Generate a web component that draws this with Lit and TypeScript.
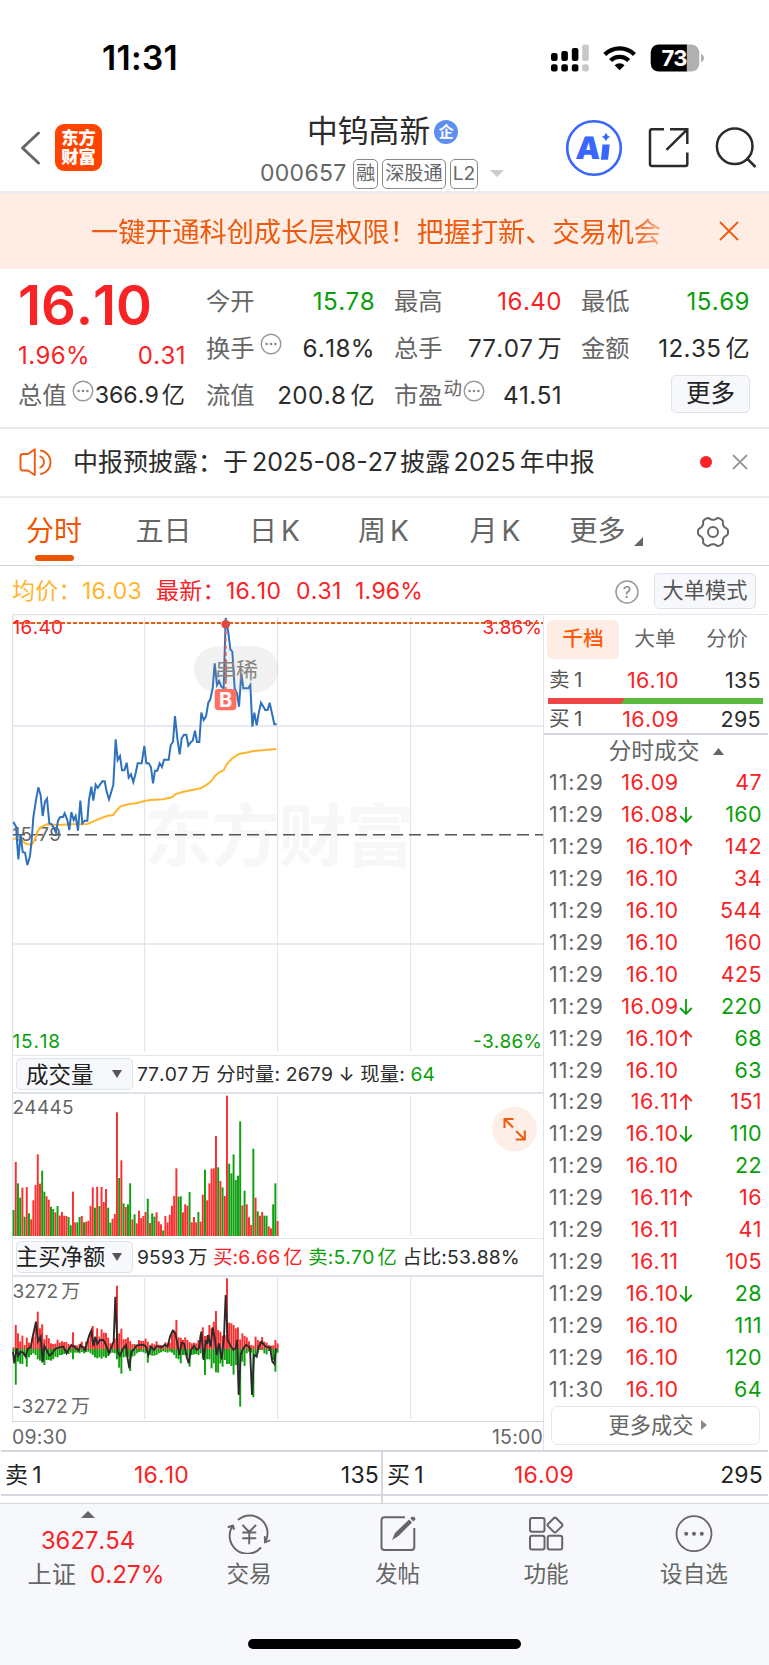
import { LitElement, html, svg, css } from 'lit';
import { customElement } from 'lit/decorators.js';

type Pt = [number, number];

const STEP = 2.2;
const X0 = 12.6;

// Minute prices and averages as curve points, three units per pixel.
const PRICE: number[] = [
  40,636,48,650,55,748,62,672,68,726,75,728,82,765,90,738,95,690,100,622,108,570,115,532,122,556,128,618,135,575,141,566,
  148,640,155,643,162,655,168,668,174,632,181,621,189,621,194,610,202,630,208,660,214,606,221,630,227,618,234,662,241,572,
  247,640,254,632,262,632,267,570,274,530,280,572,287,524,293,534,300,524,307,514,314,514,320,545,327,568,333,548,340,524,
  347,388,353,450,360,438,366,481,373,481,380,458,386,503,393,493,400,516,407,490,413,460,425,460,433,408,439,460,446,460,
  453,472,459,520,465,482,472,482,479,460,486,471,492,449,506,449,512,406,519,395,525,318,532,385,539,433,545,385,552,374,
  559,374,565,407,572,397,578,392,585,362,591,396,598,396,604,308,611,330,618,320,625,277,631,268,638,235,644,160,651,225,
  657,213,664,230,671,235,677,24,680,45,684,60,691,118,697,125,704,235,711,250,717,290,724,190,730,235,745,235,751,225,
  757,350,763,308,770,346,776,310,783,278,796,300,803,300,809,278,823,343,830,343,
];
const AVG: number[] = [
  40,688,50,684,60,684,70,695,80,702,95,704,104,690,112,665,122,652,140,643,175,645,210,643,262,642,280,634,300,626,
  320,618,340,615,348,603,362,589,385,583,412,579,430,574,450,570,490,568,510,563,519,560,525,553,545,547,565,542,602,535,
  622,523,635,512,645,498,658,487,671,481,680,463,697,445,717,432,745,427,760,423,795,420,829,417,
];
const VOL =
  '480G 336R 400G 443G 413R 500G 411R 490G 508R 451R 405R 313R 401R 362G 425G 439R 449R 470G 477G 487R 468G 497R 486R 497R 498R 501G 526G 425R 517R 517G 501G 498R 517G 515R 512R 468R 412R 473G 410R 468G 411R 456R 417R 473G 518G 506R 492R 187R 384G 331R 460G 471R 463G 400G 508R 493G 520R 482R 504R 498R 486R 446G 519R 490G 500G 487R 514R 523R 541G 498R 517R 494R 467R 438R 355R 440G 439G 487R 463R 467R 426G 517R 501R 517R 486G 515R 434R 359G 451R 400R 356R 355R 258R 352G 393R 412G 438R 137R 341G 370G 313G 390G 377G 214G 466R 422G 463R 502R 525R 296G 443R 484G 497R 486R 497G 497G 529R 535R 463G 400G 513R';
const UP = [
  322,255,280,304,287,315,293,308,315,290,265,215,265,253,298,285,295,310,312,311,299,308,304,306,306,312,318,277,315,316,
  312,305,318,305,300,282,258,300,265,290,268,278,279,293,310,308,295,137,280,266,298,297,292,303,313,312,315,300,303,303,
  296,305,316,310,313,304,314,315,320,307,310,308,280,270,240,292,293,300,292,300,306,310,308,310,300,285,262,288,287,255,
  265,245,213,270,275,287,285,115,248,250,255,265,262,298,280,288,292,304,315,317,290,300,304,291,305,308,315,317,316,300,310,
];
const DOWN = [
  335,434,365,371,372,348,380,352,345,340,345,358,362,368,375,360,360,362,358,350,352,345,345,342,340,342,338,358,338,338,
  340,336,340,337,335,340,345,352,355,352,356,350,354,348,340,338,340,358,383,401,352,350,350,393,350,347,340,336,335,337,
  340,368,345,347,347,345,340,337,334,336,338,335,338,345,355,358,370,345,345,350,380,345,343,342,345,340,355,405,358,358,
  385,370,397,398,370,380,360,372,372,378,404,375,380,500,365,378,340,335,338,472,345,338,330,330,340,343,333,335,360,395,338,
];
const NET: number[] = [
  39,335,43,370,50,325,55,347,62,335,70,338,77,350,83,327,92,322,97,295,103,268,108,245,114,305,122,290,128,365,133,318,
  140,330,148,347,155,342,165,327,175,323,190,320,200,340,208,325,214,315,225,322,236,332,242,315,255,330,262,305,268,285,
  274,272,280,318,286,290,292,312,300,300,310,300,318,315,327,340,335,320,341,305,346,170,353,335,360,347,368,328,378,315,
  382,350,388,385,394,335,402,328,410,316,430,314,438,320,445,345,453,320,462,330,470,318,485,322,495,314,503,320,510,290,
  518,272,526,280,532,310,538,345,545,308,553,312,560,350,566,370,573,330,582,318,590,330,597,325,604,275,611,360,618,300,
  622,312,624,285,632,320,638,262,645,300,650,345,657,310,665,358,672,290,677,165,683,300,692,318,700,330,707,325,711,300,
  716,465,722,345,730,325,738,315,744,318,750,325,756,465,762,345,770,350,776,320,785,305,795,318,803,322,810,322,817,365,
  823,372,828,325,
];

const pts = (flat: number[], oy: number): string => {
  const out: string[] = [];
  for (let i = 0; i < flat.length; i += 2) {
    const p: Pt = [flat[i] / 3, oy + flat[i + 1] / 3];
    out.push(p[0].toFixed(2) + ',' + p[1].toFixed(2));
  }
  return out.join(' ');
};

// Outline of the settings gear: a circle with six soft lobes.
const GEAR = Array.from({ length: 72 }, (_, i) => {
  const a = (i * Math.PI) / 36;
  const r = 13.6 + 1.5 * Math.tanh(1.8 * Math.cos(6 * a) + 0.3);
  return `${(r * Math.cos(a)).toFixed(2)},${(r * Math.sin(a)).toFixed(2)}`;
}).join(' ');

const TRADES: [string, string, string, string, string][] = [
  ['11:29', '16.09', '', '47', 'r'],
  ['11:29', '16.08', '↓', '160', 'g'],
  ['11:29', '16.10', '↑', '142', 'r'],
  ['11:29', '16.10', '', '34', 'r'],
  ['11:29', '16.10', '', '544', 'r'],
  ['11:29', '16.10', '', '160', 'r'],
  ['11:29', '16.10', '', '425', 'r'],
  ['11:29', '16.09', '↓', '220', 'g'],
  ['11:29', '16.10', '↑', '68', 'g'],
  ['11:29', '16.10', '', '63', 'g'],
  ['11:29', '16.11', '↑', '151', 'r'],
  ['11:29', '16.10', '↓', '110', 'g'],
  ['11:29', '16.10', '', '22', 'g'],
  ['11:29', '16.11', '↑', '16', 'r'],
  ['11:29', '16.11', '', '41', 'r'],
  ['11:29', '16.11', '', '105', 'r'],
  ['11:29', '16.10', '↓', '28', 'g'],
  ['11:29', '16.10', '', '111', 'g'],
  ['11:29', '16.10', '', '120', 'g'],
  ['11:30', '16.10', '', '64', 'g'],
];

const dots = html`<svg class="dots" width="22" height="22" viewBox="0 0 22 22">
  <circle cx="11" cy="11" r="9.8" fill="none" stroke="#999" stroke-width="1.4" />
  <g fill="#888"><circle cx="6.6" cy="11" r="1.3" /><circle cx="11" cy="11" r="1.3" /><circle cx="15.4" cy="11" r="1.3" /></g>
</svg>`;

@customElement('app-root')
export class AppRoot extends LitElement {
  static styles = css`
    :host {
      display: block;
      width: 769px;
      height: 1665px;
      overflow: hidden;
      background: #fff;
      color: #2b2b2b;
      font-family: Inter, 'Noto Sans CJK SC', sans-serif;
      font-size: 24px;
      line-height: 1.2;
      font-kerning: none;
    }
    * { box-sizing: border-box; }
    svg { display: block; flex: none; }
    svg text { font-family: Inter, 'Noto Sans CJK SC', sans-serif; }
    .row { display: flex; align-items: center; white-space: nowrap; }
    .r { color: #f92224; }
    .g { color: #0a9f0a; }
    .u { margin-left: 4px; }
    .fill { flex: 1; }

    .status { height: 114px; padding: 1px 65px 0 102px; }
    .clock { font-size: 33.5px; font-weight: 600; color: #000; letter-spacing: 0.3px; flex: 1; padding-top: 1px; }

    .head { height: 79px; border-bottom: 2px solid #ececf0; padding-left: 19px; }
    .head > * { margin-top: -10px; }
    .logo {
      width: 47px; height: 47px; margin-left: 13px; border-radius: 9px; background: #ff4400; color: #fff;
      font-size: 17.3px; font-weight: 900; line-height: 19px; text-align: center; padding-top: 4px; white-space: normal;
    }
    .head .names { width: 463px; display: flex; flex-direction: column; padding-left: 158px; margin-top: 0; }
    .name { height: 38px; padding-left: 47px; font-size: 30.8px; margin-top: 0; }
    .qi {
      width: 24px; height: 24px; border-radius: 50%; background: #5f8fee; color: #fff; font-size: 15px; font-weight: 700;
      display: flex; align-items: center; justify-content: center; margin-left: 4px; line-height: 1;
    }
    .code { height: 38px; font-size: 23px; color: #666; margin-top: 4px; letter-spacing: 0.3px; }
    .num { width: 93px; }
    .tag {
      border: 1.5px solid #888; border-radius: 5px; height: 30px; font-size: 19.2px; line-height: 26px; padding: 0 2px;
      margin-right: 4px; letter-spacing: 0;
    }

    .banner { height: 76px; background: #feede5; color: #ee5a0e; padding: 0 30px 0 91px; }
    .banner-text {
      font-size: 27.15px; flex: 1; height: 76px; line-height: 80px;
      -webkit-mask-image: linear-gradient(90deg, #000 540px, rgba(0, 0, 0, 0.45) 570px);
    }

    .quote { height: 160px; border-bottom: 2px solid #e9e9ec; padding: 9px 18px 0 18px; display: grid; grid-template-columns: 169px 169px 168px 169px; column-gap: 19px; align-content: start; }
    .left { display: flex; flex-direction: column; }
    .last { font-size: 54.5px; font-weight: 600; height: 55px; line-height: 55px; letter-spacing: -0.1px; }
    .l2 { height: 46px; justify-content: space-between; padding-right: 1px; letter-spacing: 0.4px; }
    .l3 { height: 33px; }
    .l3 .val { font-size: 23.2px; letter-spacing: 0; margin-right: 2px; padding-top: 1px; }
    .l3 .u { margin-left: 3px; }
    .col { display: flex; flex-direction: column; }
    .col .row { height: 47px; }
    .lab { color: #666; font-size: 24.3px; }
    .val { margin-left: auto; font-size: 24.2px; letter-spacing: 0.4px; }
    .dots { margin: -9px 0 0 5px; }
    .dong { font-size: 18.5px; color: #666; margin-top: -14px; margin-left: 1px; }
    .btn { background: #f7f8fb; border: 1.5px solid #dee2ea; border-radius: 5px; display: flex; align-items: center; justify-content: center; }
    .more { width: 79px; height: 38px; font-size: 24.5px; color: #222; margin: -4px 0 0 auto; }

    .notice { height: 69px; border-bottom: 2px solid #ececec; padding: 0 21px 2px 19px; font-size: 25px; }
    .notice-text { margin-left: 20px; flex: 1; }
    .v { margin-left: 3px; letter-spacing: 0.2px; }
    .reddot { width: 12px; height: 12px; border-radius: 50%; background: #f92224; margin-right: 20px; }

    .tabs { height: 68px; border-bottom: 1px solid #ccd4da; font-size: 28px; color: #666; display: grid; grid-template-columns: 108px 111px 111px 107px 116px 106px 107px; }
    .tab { display: flex; align-items: center; justify-content: center; white-space: nowrap; position: relative; padding-top: 1px; }
    .tab.on { color: #ee5500; }
    .tab.on::after { content: ''; position: absolute; left: 35px; top: 57px; width: 39px; height: 6px; border-radius: 3px; background: #ee5500; }
    .tab.set { padding-top: 0; }
    .corner { margin: 18px 0 0 8px; }

    .info { height: 48px; padding: 3px 13px 0 12px; font-size: 23px; color: #f92224; letter-spacing: 0.2px; }
    .avg { color: #ffb62e; }
    .w70 { width: 70px; }
    .w74 { width: 74px; }
    .big { width: 102px; height: 36px; font-size: 21.2px; letter-spacing: 0; color: #555; margin-left: 15px; margin-top: -1px; }

    .body { display: grid; grid-template-columns: 531px 226px; margin-left: 12px; height: 836px; }
    .charts { display: flex; flex-direction: column; }
    .ind { height: 39px; padding-left: 3px; font-size: 19.3px; letter-spacing: 0.15px; border-top: 1px solid #e4e5ee; border-bottom: 2px solid #e0e2ea; border-left: 1px solid #e4e5ee; }
    .ind > span:last-child { padding-top: 2px; }
    .ind .u { margin-left: 3px; }
    .pick { width: 117px; height: 32px; font-size: 22.5px; justify-content: flex-start; padding-left: 9px; color: #222; margin-right: 4px; letter-spacing: 0; }
    .pick.tight { padding-left: 0; font-size: 22.3px; text-indent: -1px; }
    .pick svg { margin-left: auto; margin-right: 10px; }
    .pick.tight svg { margin-left: 7px; }
    .time { height: 29px; font-size: 19.5px; color: #666; justify-content: space-between; border-top: 1px solid #d4d7e0; padding-top: 3px; letter-spacing: 0.2px; }

    .book { border-left: 1px solid #dfe2ea; border-top: 1px solid #e4e5ee; width: 225px; display: flex; flex-direction: column; }
    .seg { height: 47px; font-size: 20.8px; color: #666; padding-left: 3px; padding-top: 1px; }
    .seg span { width: 72px; height: 39px; display: flex; align-items: center; justify-content: center; border-radius: 6px; }
    .seg .on { background: #feede5; color: #ff5a0a; font-weight: 500; }
    .ord { display: grid; grid-template-columns: 60px 70px 82px; padding: 1px 0 0 5px; align-items: center; font-size: 21.5px; height: 36px; letter-spacing: 0.3px; }
    .ord > :nth-child(2), .ord > :nth-child(3) { text-align: right; }
    .ord.low { height: 29px; padding-top: 2px; }
    .lbl { color: #555; font-size: 20.6px; }
    .ratio { margin-left: 4px; }
    .deal { height: 34px; font-size: 22.8px; color: #666; border-top: 2px solid #d4d7e2; justify-content: center; padding-left: 20px; }
    .deal svg { margin-left: 13px; }
    .trade { display: grid; grid-template-columns: 60px 69.5px 19.5px 64px; padding-left: 5px; height: 31.95px; align-items: center; font-size: 21.5px; letter-spacing: 0.4px; }
    .trade > :nth-child(2), .trade > :nth-child(4) { text-align: right; }
    .tm { color: #666; letter-spacing: 0.9px; }
    .all { width: 209px; height: 39px; border: 1.5px solid #e6e7ea; border-radius: 6px; margin: 0 0 0 7px; font-size: 21.2px; color: #666; justify-content: center; padding-left: 5px; }
    .all svg { margin-left: 8px; }

    .pair { height: 46px; margin: 0 1px; border-top: 2px solid #d6d8e0; border-bottom: 2px solid #d6d8e0; display: grid; grid-template-columns: 382px 385px; font-size: 23px; letter-spacing: 0.2px; }
    .half { display: grid; grid-template-columns: 60px 124px 1fr; align-items: center; padding: 6px 5px 0 4px; color: #222; }
    .half:first-child { border-right: 2px solid #d6d8e0; padding-right: 2px; }
    .half:last-child { grid-template-columns: 60px 127px 1fr; }
    .half > :nth-child(2), .half > :nth-child(3) { text-align: right; }
    .gap { height: 7px; margin-left: 1px; width: 382px; border-right: 2px solid #d6d8e0; }
    .nav { height: 162px; background: #f7f8fb; border-top: 1px solid #d6d8e0; display: grid; grid-template-columns: 175px 148px 149px 148px 148px; color: #666; position: relative; align-items: start; }
    .item { display: flex; flex-direction: column; align-items: center; font-size: 22.6px; padding-top: 10px; }
    .item span { margin-top: 6px; line-height: 28px; }
    .idx { display: flex; flex-direction: column; align-items: center; padding: 7px 0 0 0; }
    .idx b { font-weight: 400; font-size: 23.8px; line-height: 30px; margin-top: 8px; padding-left: 1px; }
    .idx .row { line-height: 34px; font-size: 24.2px; padding-left: 17px; gap: 14px; margin-top: 2px; }
    .home { position: absolute; left: 248px; top: 135px; width: 273px; height: 10px; border-radius: 5px; background: #000; }
  `;

  private cell(label: unknown, value: unknown, cls = '') {
    return html`<div class="row"><span class="lab row">${label}</span><span class="val ${cls}">${value}</span></div>`;
  }

  private mainChart() {
    return svg`
      <g stroke="#e2e5ee" stroke-width="1.4" fill="none">
        <path d="M12.6 1056V614.6H544" stroke="#e0e2ea" />
        <path d="M144.6 617V1052M277.6 617V1052M410.6 617V1052" stroke-width="1.2" />
        <path d="M13 726H543M13 944H543" />
      </g>
      <text x="144" y="861" font-size="68" font-weight="700" fill="#f7f7f8" textLength="270">东方财富</text>
      <path d="M13 623H543" stroke="#ee5a0e" stroke-width="2" stroke-dasharray="4 2" />
      <path d="M13 834.7H543" stroke="#555" stroke-width="1.5" stroke-dasharray="12 6" />
      <text x="12.5" y="634" font-size="19" fill="#f92224" textLength="50.5">16.40</text>
      <text x="482.5" y="634" font-size="19" fill="#f92224" textLength="59.5">3.86%</text>
      <text x="12.5" y="841" font-size="19" fill="#666" textLength="48.5">15.79</text>
      <text x="12.5" y="1048" font-size="19" fill="#0a9f0a" textLength="47.5">15.18</text>
      <text x="473" y="1048" font-size="19" fill="#0a9f0a" textLength="69">-3.86%</text>
      <polyline points="${pts(AVG, 610)}" fill="none" stroke="#ffb62e" stroke-width="2" />
      <polyline points="${pts(PRICE, 610)}" fill="none" stroke="#2e72bd" stroke-width="2" />
      <rect x="194" y="646.5" width="84.5" height="46" rx="23" fill="#999" fill-opacity="0.14" />
      <text x="215" y="678" font-size="22" fill="#858585" textLength="43">串稀</text>
      <path d="M225.8 624V690" stroke="#f9564c" stroke-width="1.6" stroke-dasharray="4 3" />
      <circle cx="225.7" cy="624.3" r="4.3" fill="#e2473f" />
      <rect x="214.7" y="689" width="21.7" height="21.3" rx="4" fill="#ff6f61" />
      <text x="225.6" y="706.6" font-size="20" font-weight="700" fill="#fff" text-anchor="middle">B</text>`;
  }

  private volChart() {
    return svg`
      <g stroke="#e2e5ee" stroke-width="1.2">
        <path d="M12.6 1094V1238M144.6 1095V1236M277.6 1095V1236M410.6 1095V1236" />
      </g>
      ${VOL.split(' ').map((s, i) => {
        const h = (558 - parseInt(s, 10)) / 3;
        return svg`<rect x="${(X0 + i * STEP).toFixed(2)}" y="${(1236 - h).toFixed(2)}" width="1.95" height="${h.toFixed(2)}" fill="${s.endsWith('R') ? '#f9302f' : '#0ea00e'}" />`;
      })}
      <text x="12.5" y="1114" font-size="19" fill="#666" textLength="61">24445</text>
      <circle cx="514.5" cy="1129" r="22.4" fill="#fdefe8" />
      <path d="M513 1127.5L504.5 1119M504.5 1128V1119H513.5M516 1131L524.8 1139.5M515.8 1139.5H524.8V1130.5" fill="none" stroke="#ee5a0e" stroke-width="2" />`;
  }

  private netChart() {
    return svg`
      <path d="M12.6 1277V1421M144.6 1278V1419M277.6 1278V1419M410.6 1278V1419" stroke="#e2e5ee" stroke-width="1.2" />
      ${UP.map((u, i) => {
        const x = (X0 + i * STEP).toFixed(2);
        return svg`<rect x="${x}" y="${(1240 + u / 3).toFixed(2)}" width="1.95" height="${((327 - u) / 3).toFixed(2)}" fill="#f9302f" />
          <rect x="${x}" y="1349" width="1.95" height="${((DOWN[i] - 327) / 3).toFixed(2)}" fill="#0ea00e" />`;
      })}
      <polyline points="${pts(NET, 1240)}" fill="none" stroke="#2b2b2b" stroke-width="1.9" />
      <text x="12.5" y="1297.5" font-size="19" fill="#666">3272<tspan dx="3">万</tspan></text>
      <text x="12.5" y="1412.5" font-size="19" fill="#666" letter-spacing="0.2">-3272<tspan dx="3">万</tspan></text>`;
  }

  render() {
    const caret = html`<svg width="10" height="8" viewBox="0 0 10 8"><path d="M0 0H10L5 8z" fill="#555" /></svg>`;
    return html`
      <div class="row status">
        <span class="clock">11:31</span>
        <svg width="154" height="28" viewBox="550 43 154 28">
          <g fill="#000">
            <rect x="551" y="52" width="6.6" height="8" rx="2.2" /><rect x="561.3" y="50" width="6.6" height="10" rx="2.2" />
            <rect x="571.8" y="47" width="6.6" height="13" rx="2.2" />
            <rect x="551" y="63.3" width="6.6" height="7.2" rx="2.2" /><rect x="561.3" y="63.3" width="6.6" height="7.2" rx="2.2" /><rect x="571.8" y="63.3" width="6.6" height="7.2" rx="2.2" />
          </g>
          <g fill="#c8c8c8"><rect x="582.2" y="43.6" width="6.6" height="16.4" rx="2.2" /><rect x="582.2" y="63.3" width="6.6" height="7.2" rx="2.2" /></g>
          <g fill="none" stroke="#000" stroke-width="4.2">
            <path d="M604.8 53.6a21 21 0 0 1 29.7 0" /><path d="M610.6 59.6a12.8 12.8 0 0 1 18.1 0" />
          </g>
          <path d="M619.6 69.2L614.6 64.2a7.1 7.1 0 0 1 10 0z" fill="#000" />
          <clipPath id="bat"><rect x="650.7" y="43.5" width="48.6" height="27" rx="8" /></clipPath>
          <g clip-path="url(#bat)"><rect x="650" y="43" width="37" height="28" fill="#000" /><rect x="686.8" y="43" width="14" height="28" fill="#b0b0b0" /></g>
          <path d="M701 53v8q3-1 3-4t-3-4z" fill="#b0b0b0" />
          <text x="674.5" y="65" font-size="22" font-weight="700" fill="#fff" text-anchor="middle" textLength="26">73</text>
        </svg>
      </div>

      <div class="row head">
        <svg width="23" height="38" viewBox="19 129 23 38"><path d="M38.5 133L22.5 148L38.5 163" fill="none" stroke="#666" stroke-width="3" stroke-linecap="round" stroke-linejoin="round" /></svg>
        <div class="logo">东方<br />财富</div>
        <div class="names">
          <div class="row name">中钨高新<span class="qi">企</span></div>
          <div class="row code">
            <span class="num">000657</span><span class="tag">融</span><span class="tag">深股通</span><span class="tag">L2</span>
            <svg width="22" height="8" viewBox="-8 0 22 8"><path d="M0 0H14L7 7z" fill="#ccc" /></svg>
          </div>
        </div>
        <svg width="192" height="60" viewBox="565 118 192 60">
          <circle cx="594" cy="148" r="26.8" fill="none" stroke="#3866ff" stroke-width="2.6" />
          <text x="575.5" y="159" font-size="31" font-weight="900" fill="#3866ff" transform="skewX(-4)" dx="11">A</text>
          <path d="M602.5 144.5h7.2l-1.6 15.2h-7.2z" fill="#3866ff" />
          <path d="M606 132.5q1 3.6 4.4 4.4q-3.4.9-4.4 4.6q-1-3.7-4.4-4.6q3.4-.8 4.4-4.4z" fill="#3866ff" />
          <g fill="none" stroke="#2b2b2b" stroke-width="2.5">
            <path d="M664 129.3H652q-2 0-2 2V164q0 2 2 2H685.3q2 0 2-2V152.5M670 129.3H687.3V144M666.5 149.8L687 129.6" />
            <circle cx="734.7" cy="146.3" r="17.8" /><path d="M746.5 158L755.5 167" />
          </g>
        </svg>
      </div>

      <div class="row banner">
        <div class="banner-text">一键开通科创成长层权限！把握打新、交易机会</div>
        <svg width="20" height="20" viewBox="0 0 20 20"><path d="M1 1L19 19M19 1L1 19" stroke="#ee5a0e" stroke-width="1.8" /></svg>
      </div>

      <div class="quote">
        <div class="left">
          <div class="last r">16.10</div>
          <div class="row l2 r"><span>1.96%</span><span>0.31</span></div>
          <div class="row l3"><span class="lab">总值</span>${dots}<span class="val">366.9<span class="u">亿</span></span></div>
        </div>
        <div class="col">
          ${this.cell('今开', '15.78', 'g')}
          ${this.cell(html`换手${dots}`, '6.18%')}
          ${this.cell('流值', html`200.8<span class="u">亿</span>`)}
        </div>
        <div class="col">
          ${this.cell('最高', '16.40', 'r')}
          ${this.cell('总手', html`77.07<span class="u">万</span>`)}
          ${this.cell(html`市盈<span class="dong">动</span><span style="margin-left:-4px">${dots}</span>`, '41.51')}
        </div>
        <div class="col">
          ${this.cell('最低', '15.69', 'g')}
          ${this.cell('金额', html`12.35<span class="u">亿</span>`)}
          <div class="row"><span class="btn more">更多</span></div>
        </div>
      </div>

      <div class="row notice">
        <svg width="34" height="28" viewBox="18.5 447.5 34 28">
          <g fill="none" stroke="#ee5a0e" stroke-width="1.9" stroke-linejoin="round" stroke-linecap="round">
            <path d="M34.3 448.8V474.5L27.5 470H22.5q-2.5 0-2.5-2.5V456q0-2.5 2.5-2.5H27.5z" />
            <path d="M39.8 456a6 6 0 0 1 0 11M40.5 450a12 12 0 0 1 0 23.5" />
          </g>
        </svg>
        <span class="notice-text">中报预披露：于<span class="u">2025-08-27</span><span class="v">披露</span><span class="v">2025</span><span class="u">年中报</span></span>
        <span class="reddot"></span>
        <svg width="16" height="16" viewBox="0 0 16 16"><path d="M1 1L15 15M15 1L1 15" stroke="#999" stroke-width="1.8" /></svg>
      </div>

      <div class="tabs">
        <div class="tab on">分时</div>
        <div class="tab">五日</div>
        <div class="tab">日<span class="u">K</span></div>
        <div class="tab">周<span class="u">K</span></div>
        <div class="tab">月<span class="u">K</span></div>
        <div class="tab">更多<svg class="corner" width="9" height="9" viewBox="0 0 9 9"><path d="M9 0V9H0z" fill="#666" /></svg></div>
        <div class="tab set">
          <svg width="32" height="32" viewBox="-16 -16 32 32" fill="none" stroke="#666" stroke-width="2" stroke-linejoin="round">
            <polygon points="${GEAR}" /><circle r="5" />
          </svg>
        </div>
      </div>

      <div class="row info">
        <span class="avg w70">均价：</span><span class="avg w74">16.03</span>
        <span class="w70">最新：</span><span class="w70">16.10</span><span style="width:59px">0.31</span><span>1.96%</span>
        <span class="fill"></span>
        <svg width="24" height="24" viewBox="0 0 24 24"><circle cx="12" cy="12" r="11" fill="none" stroke="#999" stroke-width="1.5" /><text x="12" y="18" font-size="16.5" fill="#888" text-anchor="middle">?</text></svg>
        <span class="btn big">大单模式</span>
      </div>

      <div class="body">
        <div class="charts">
          <svg width="532" height="441" viewBox="12 614 532 441">${this.mainChart()}</svg>
          <div class="row ind"><span class="btn pick">成交量${caret}</span><span>77.07<span class="u">万</span> 分时量: 2679 ↓ 现量: <span class="g">64</span></span></div>
          <svg width="532" height="144" viewBox="12 1094 532 144">${this.volChart()}</svg>
          <div class="row ind"><span class="btn pick tight">主买净额${caret}</span><span>9593<span class="u">万</span> <span class="r">买:6.66<span class="u">亿</span></span> <span class="g">卖:5.70<span class="u">亿</span></span> 占比:53.88%</span></div>
          <svg width="532" height="144" viewBox="12 1277 532 144">${this.netChart()}</svg>
          <div class="row time"><span>09:30</span><span>15:00</span></div>
        </div>
        <div class="book">
          <div class="row seg"><span class="on">千档</span><span>大单</span><span>分价</span></div>
          <div class="ord"><span class="lbl">卖<span class="u">1</span></span><span class="r">16.10</span><span>135</span></div>
          <svg class="ratio" width="215" height="6" viewBox="0 0 215 6"><path d="M0 0H215V6H0z" fill="#5abb40" /><path d="M0 0H77L73 6H0z" fill="#ee4545" /></svg>
          <div class="ord low"><span class="lbl">买<span class="u">1</span></span><span class="r">16.09</span><span>295</span></div>
          <div class="row deal">分时成交<svg width="11" height="7" viewBox="0 0 11 7"><path d="M5.5 0L11 7H0z" fill="#666" /></svg></div>
          ${TRADES.map(
            ([t, p, a, q, c]) => html`<div class="trade"><span class="tm">${t}</span><span class="r">${p}</span>
              <span>${a
                ? html`<svg width="14" height="18" viewBox="0 0 14 18"><path d="${a === '↓' ? 'M7 1V16M1.2 10L7 16L12.8 10' : 'M7 17V2M1.2 8L7 2L12.8 8'}" fill="none" stroke="${a === '↓' ? '#0a9f0a' : '#f92224'}" stroke-width="1.8" /></svg>`
                : ''}</span><span class="${c}">${q}</span></div>`,
          )}
          <div class="row all">更多成交<svg width="6" height="10" viewBox="0 0 6 10"><path d="M0 0L6 5L0 10z" fill="#888" /></svg></div>
        </div>
      </div>

      <div class="pair">
        <div class="half"><span>卖<span class="u">1</span></span><span class="r">16.10</span><span>135</span></div>
        <div class="half"><span>买<span class="u">1</span></span><span class="r">16.09</span><span>295</span></div>
      </div>
      <div class="gap"></div>

      <div class="nav">
        <div class="idx">
          <svg width="14" height="7" viewBox="0 0 14 7"><path d="M7 0L14 7H0z" fill="#666" /></svg>
          <b class="r">3627.54</b>
          <div class="row"><span>上证</span><span class="r">0.27%</span></div>
        </div>
        <div class="item">
          <svg width="44" height="40" viewBox="227.5 1514 44 40" fill="none" stroke="#666" stroke-width="1.9" stroke-linecap="round" stroke-linejoin="round">
            <path d="M239 1519.5A17.8 17.8 0 0 1 265.5 1542.5L270 1540.5M265.5 1542.5L265.3 1537" />
            <path d="M261 1548A17.8 17.8 0 0 1 233.5 1525.5L229 1527M233.5 1525.5L234.5 1529" />
            <path d="M243.5 1525.5L249.7 1532L256 1525.5M243.5 1532.5H256M243.5 1538.3H256M249.7 1532V1543.5" />
          </svg>
          <span>交易</span>
        </div>
        <div class="item">
          <svg width="44" height="40" viewBox="376 1514 44 40">
            <path d="M405 1517.2H384.5q-3 0-3 3V1547q0 3 3 3H411.3q3 0 3-3V1528" fill="none" stroke="#666" stroke-width="2" />
            <path d="M392 1540L395 1533L409 1519.5L412 1522.5L398.5 1536z" fill="#666" /><path d="M410.3 1518.3L412.2 1516.5Q415 1516.5 415.7 1519L413.3 1521.5z" fill="#666" />
          </svg>
          <span>发帖</span>
        </div>
        <div class="item">
          <svg width="44" height="40" viewBox="524 1514 44 40" fill="none" stroke="#666" stroke-width="2">
            <rect x="530" y="1518" width="14.5" height="13.8" rx="2" /><rect x="530" y="1535.7" width="14.5" height="13.8" rx="2" /><rect x="547.7" y="1535.7" width="14.5" height="13.8" rx="2" />
            <rect x="549.3" y="1519.4" width="11.4" height="11.4" rx="1.8" transform="rotate(45 555 1525.1)" />
          </svg>
          <span>功能</span>
        </div>
        <div class="item">
          <svg width="44" height="40" viewBox="672 1514 44 40"><circle cx="694" cy="1533.7" r="17.5" fill="none" stroke="#666" stroke-width="1.8" /><g fill="#666"><circle cx="686.2" cy="1533.7" r="2" /><circle cx="694" cy="1533.7" r="2" /><circle cx="701.8" cy="1533.7" r="2" /></g></svg>
          <span>设自选</span>
        </div>
        <div class="home"></div>
      </div>
    `;
  }
}
